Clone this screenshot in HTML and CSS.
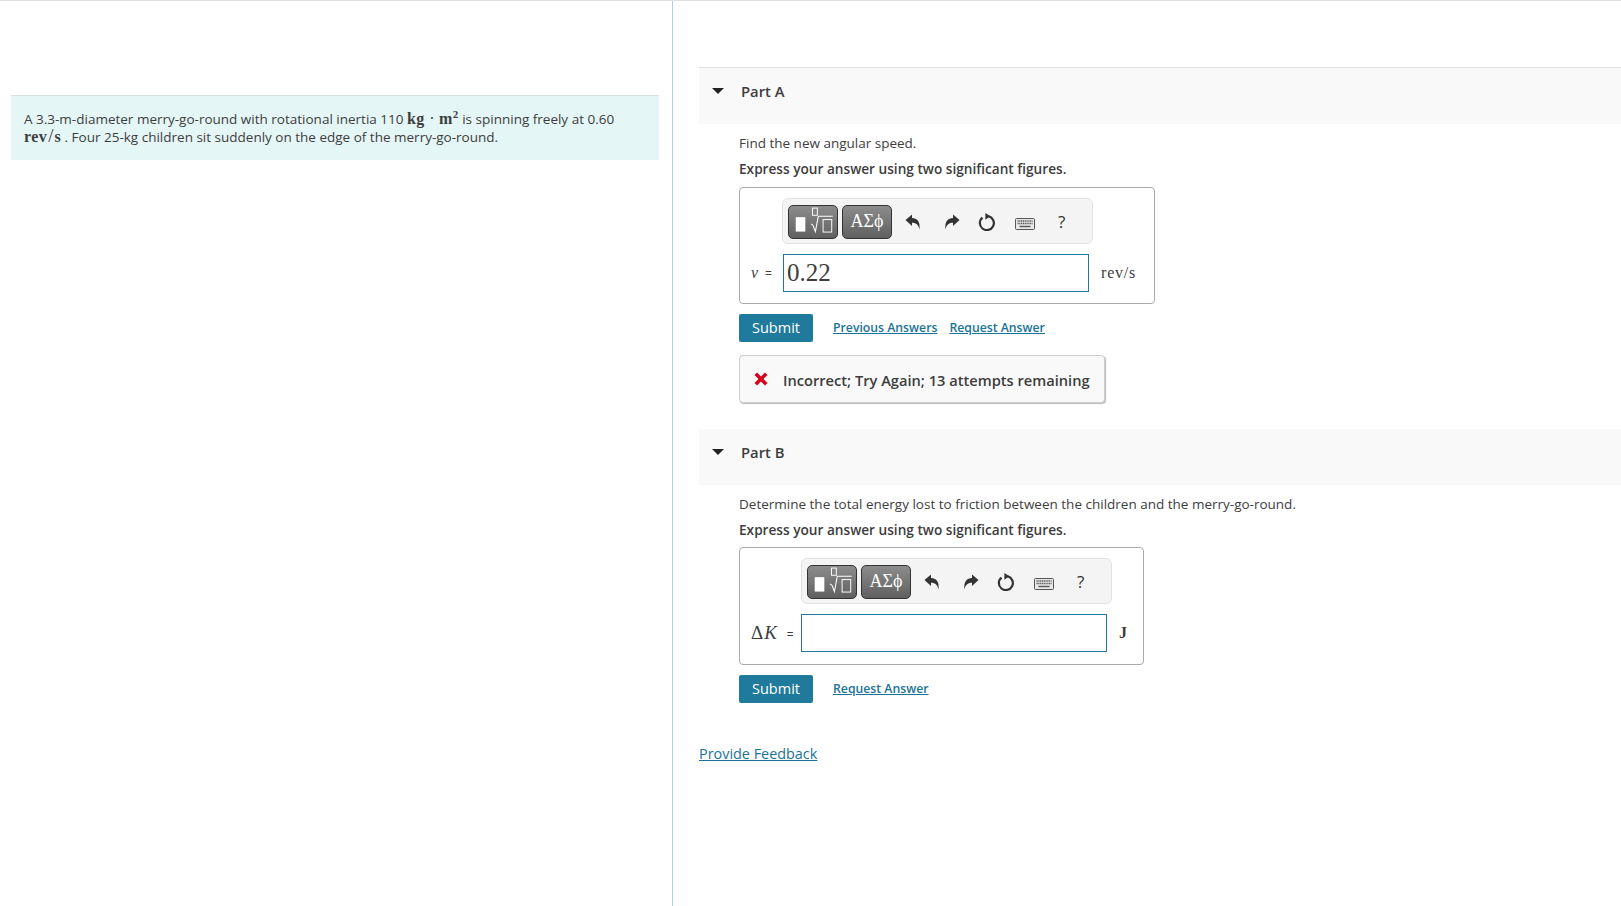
FILE: index.html
```html
<!DOCTYPE html>
<html lang="en">
<head>
<meta charset="UTF-8" />
<title>Part A</title>
<link rel="stylesheet" href="styles.css">
</head>
<body>
<svg class="icon-defs" width="0" height="0">
  <defs>
    <symbol id="i-undo" viewBox="0 0 16 16"><path d="M0.500 6 7 0.500V4C12 4 15.500 7.500 14.500 15.500 13.600 11 11.500 8.700 7 8.700V12Z"/></symbol>
    <symbol id="i-redo" viewBox="0 0 16 16"><path d="M15.500 6 9 0.500V4C4 4 0.500 7.500 1.500 15.500 2.400 11 4.500 8.700 9 8.700V12Z"/></symbol>
    <symbol id="i-reset" viewBox="0 0 18 18"><path d="M10.600 3.300A7 7 0 1 1 4.500 4.600" fill="none" stroke="currentColor" stroke-width="2.200"/><path d="M7.400 0 12.400 3.300 7.400 6.800Z"/></symbol>
    <symbol id="i-keys" viewBox="0 0 20 12">
      <rect x="0.500" y="0.500" width="19" height="11" rx="1" fill="#e8e8e8" stroke="#555"/>
      <path d="M2.500 3H17.500M2.500 5.500H17.500" stroke="#555" stroke-width="1.300" stroke-dasharray="1.200 .6" fill="none"/>
      <path d="M4.500 8.500H15.500" stroke="#555" stroke-width="1.400" fill="none"/>
    </symbol>
    <symbol id="i-templates" viewBox="0 0 50 33">
      <rect x="7" y="12" width="10" height="15" fill="#fff"/>
      <path d="M23 19l2 1.500 2.500 6.500 3-16h15" fill="none" stroke="#fff" stroke-width="1.100"/>
      <rect x="24.500" y="2.500" width="5" height="7.500" fill="none" stroke="#fff" stroke-width="1"/>
      <rect x="35.500" y="14.500" width="9" height="13" fill="none" stroke="#fff" stroke-width="1"/>
    </symbol>
  </defs>
</svg>
<div class="page">
  <div class="left-pane">
    <div class="problem">
      A 3.3-m-diameter merry-go-round with rotational inertia 110 <span class="bold">kg</span> <span class="dot">&middot;</span> <span class="bold">m<sup>2</sup></span> is spinning freely at 0.60<br>
      <span class="bold">rev</span><span class="slash">/</span><span class="bold">s</span> . Four 25-kg children sit suddenly on the edge of the merry-go-round.
    </div>
  </div>
  <div class="right-pane">
    <div class="part-head">
      <span class="caret"></span>
      <span class="part-title">Part A</span>
    </div>
    <div class="part-body">
      <p class="prompt">Find the new angular speed.</p>
      <p class="instruct">Express your answer using two significant figures.</p>
      <div class="answer-box box-a">
        <div class="toolbar">
          <button class="tool-btn"><svg class="tpl-icon"><use href="#i-templates"/></svg></button>
          <button class="tool-btn greek">&Alpha;&Sigma;&#981;</button>
          <svg class="tool undo"><use href="#i-undo"/></svg>
          <svg class="tool redo"><use href="#i-redo"/></svg>
          <svg class="tool reset"><use href="#i-reset"/></svg>
          <svg class="tool keys"><use href="#i-keys"/></svg>
          <span class="tool help">?</span>
        </div>
        <div class="entry-row">
          <span class="var"><i>&nu;</i> <span class="eq">=</span></span>
          <div class="entry">0.22</div>
          <span class="unit">rev/s</span>
        </div>
      </div>
      <div class="actions">
        <button class="submit">Submit</button>
        <a class="link first" href="#">Previous Answers</a>
        <a class="link" href="#">Request Answer</a>
      </div>
      <div class="feedback">
        <svg class="x-mark" viewBox="0 0 14 14"><path d="M0.500 3 3 0.500 7 4.500 11 0.500 13.500 3 9.500 7 13.500 11 11 13.500 7 9.500 3 13.500 0.500 11 4.500 7Z"/></svg>
        <span>Incorrect; Try Again; 13 attempts remaining</span>
      </div>
    </div>

    <div class="part-head part-b">
      <span class="caret"></span>
      <span class="part-title">Part B</span>
    </div>
    <div class="part-body">
      <p class="prompt">Determine the total energy lost to friction between the children and the merry-go-round.</p>
      <p class="instruct">Express your answer using two significant figures.</p>
      <div class="answer-box box-b">
        <div class="toolbar">
          <button class="tool-btn"><svg class="tpl-icon"><use href="#i-templates"/></svg></button>
          <button class="tool-btn greek">&Alpha;&Sigma;&#981;</button>
          <svg class="tool undo"><use href="#i-undo"/></svg>
          <svg class="tool redo"><use href="#i-redo"/></svg>
          <svg class="tool reset"><use href="#i-reset"/></svg>
          <svg class="tool keys"><use href="#i-keys"/></svg>
          <span class="tool help">?</span>
        </div>
        <div class="entry-row">
          <span class="var large">&Delta;<i>K</i> <span class="eq">=</span></span>
          <div class="entry"></div>
          <span class="unit j">J</span>
        </div>
      </div>
      <div class="actions">
        <button class="submit">Submit</button>
        <a class="link first" href="#">Request Answer</a>
      </div>
    </div>
    <a class="provide" href="#">Provide Feedback</a>
  </div>
</div>
</body>
</html>
```

FILE: styles.css
```css
html, body {
  margin: 0;
  height: 100%;
  overflow: hidden;
}
body {
  background: #fff;
  color: #3d3d3d;
  font-family: 'Open Sans', sans-serif;
  font-size: 13.500px;
}
.icon-defs {
  display: block;
  height: 0;
}
.page {
  display: flex;
  height: 906px;
  border-top: 1px solid #e0e0e0;
  box-sizing: border-box;
}
/* Left side */
.left-pane {
  width: 673px;
  flex: none;
  box-sizing: border-box;
  border-right: 1px solid #b5cfe2;
  padding: 94px 0 0 11px;
}
.problem {
  width: 648px;
  height: 65px;
  box-sizing: border-box;
  background: #e5f6f7;
  border-top: 1px solid #d8e2e2;
  padding: 14px 12px 0 13px;
  line-height: 18px;
  font-size: 13.500px;
}
.bold {
  font-family: 'Liberation Serif', serif;
  font-weight: bold;
  font-size: 16px;
  letter-spacing: 0.400px;
}
.dot {
  font-family: 'Liberation Serif', serif;
  font-size: 16px;
  margin: 0 1px;
}
.slash {
  font-family: 'Liberation Serif', serif;
  font-size: 19px;
  line-height: 0;
  margin: 0 1px;
}
.problem sup {
  font-size: 11px;
  line-height: 0;
}
/* Right side */
.right-pane {
  flex: 1;
  padding: 66px 0 0 26px;
}
.part-head {
  display: flex;
  align-items: flex-start;
  height: 57px;
  box-sizing: border-box;
  background: #f9f9f9;
  border-top: 1px solid #e0e0e0;
  padding: 13px 0 0 13px;
}
.part-b {
  height: 56px;
  border-top: none;
  margin-top: 26px;
}
.caret {
  width: 0;
  height: 0;
  margin-top: 7px;
  border-left: 6px solid transparent;
  border-right: 6px solid transparent;
  border-top: 6px solid #222;
}
.part-title {
  margin-left: 17px;
  font-weight: 600;
  font-size: 14.800px;
  line-height: 20px;
}
.part-body {
  padding: 9px 0 0 40px;
}
.prompt {
  margin: 0;
  line-height: 20px;
}
.instruct {
  margin: 6px 0 0;
  line-height: 20px;
  font-weight: 600;
  font-size: 13.650px;
}
.answer-box {
  margin-top: 8px;
  height: 117px;
  box-sizing: border-box;
  border: 1px solid #aaa;
  border-radius: 4px;
  padding: 10px 0 0 10px;
}
.box-a {
  width: 416px;
}
.box-b {
  width: 405px;
  height: 118px;
  margin-top: 7px;
}
.toolbar {
  display: flex;
  align-items: center;
  width: 311px;
  height: 46px;
  box-sizing: border-box;
  background: #f4f4f4;
  border: 1px solid #e2e2e2;
  border-radius: 6px;
  padding: 1px 0 0 5px;
  margin-left: 32px;
}
.box-b .toolbar {
  margin-left: 51px;
}
.tool-btn {
  width: 50px;
  height: 34px;
  padding: 0;
  margin-right: 4px;
  border: 1px solid #333;
  border-radius: 5px;
  background: linear-gradient(to bottom, #8c8c8c, #606060);
  color: #fff;
  display: flex;
  align-items: center;
  justify-content: center;
}
.tpl-icon {
  width: 50px;
  height: 33px;
}
.greek {
  font-family: 'Liberation Serif', serif;
  font-size: 18px;
}
.tool {
  flex: none;
  fill: #333;
  color: #333;
}
.undo, .redo {
  width: 16px;
  height: 16px;
}
.undo {
  margin-left: 9px;
}
.redo {
  margin-left: 23px;
}
.reset {
  width: 18px;
  height: 18px;
  margin-left: 18px;
}
.keys {
  width: 20px;
  height: 12px;
  margin-left: 19px;
  margin-top: 5px;
}
.help {
  margin-left: 23px;
  font-size: 17px;
  line-height: 20px;
}
.entry-row {
  display: flex;
  align-items: center;
  margin-top: 10px;
}
.var {
  width: 33px;
  padding-left: 1px;
  box-sizing: border-box;
  flex: none;
  font-family: 'Liberation Serif', serif;
  font-size: 16px;
  white-space: nowrap;
}
.var.large {
  width: 51px;
  font-size: 19px;
  letter-spacing: 1px;
}
.eq {
  font-family: 'Open Sans', sans-serif;
  font-size: 12px;
  margin-left: 3px;
}
.entry {
  width: 306px;
  height: 38px;
  box-sizing: border-box;
  border: 1px solid #1f7a9c;
  padding-left: 3px;
  font-family: 'Liberation Serif', serif;
  font-size: 25px;
  line-height: 36px;
}
.unit {
  margin-left: 12px;
  font-family: 'Liberation Serif', serif;
  font-size: 16px;
  letter-spacing: 0.800px;
}
.unit.j {
  margin-left: 12px;
  font-weight: bold;
  font-size: 16px;
}
.actions {
  display: flex;
  align-items: center;
  margin-top: 10px;
  height: 28px;
}
.submit {
  width: 74px;
  height: 28px;
  padding: 0 0 2px;
  border: none;
  border-radius: 2px;
  background: #1f7a9c;
  color: #fff;
  font-family: 'Open Sans', sans-serif;
  font-size: 14.500px;
  font-weight: 500;
}
.link {
  margin-left: 12px;
  padding-bottom: 2px;
  color: #1a7397;
  font-size: 12.250px;
  font-weight: 600;
  text-decoration: underline;
}
.link.first {
  margin-left: 20px;
}
.feedback {
  display: flex;
  align-items: center;
  width: 366px;
  height: 48px;
  box-sizing: border-box;
  margin-top: 13px;
  padding-left: 14px;
  background: #f9f9f9;
  border: 1px solid #ccc;
  border-radius: 4px;
  box-shadow: 1px 1px 1px #bbb;
  font-weight: 600;
  font-size: 14.650px;
  white-space: nowrap;
}
.feedback span {
  padding-top: 1px;
}
.x-mark {
  width: 14px;
  height: 14px;
  margin-right: 15px;
  fill: #d6001c;
}
.provide {
  display: inline-block;
  margin-top: 41px;
  color: #1a7397;
  font-size: 14.400px;
}
```
